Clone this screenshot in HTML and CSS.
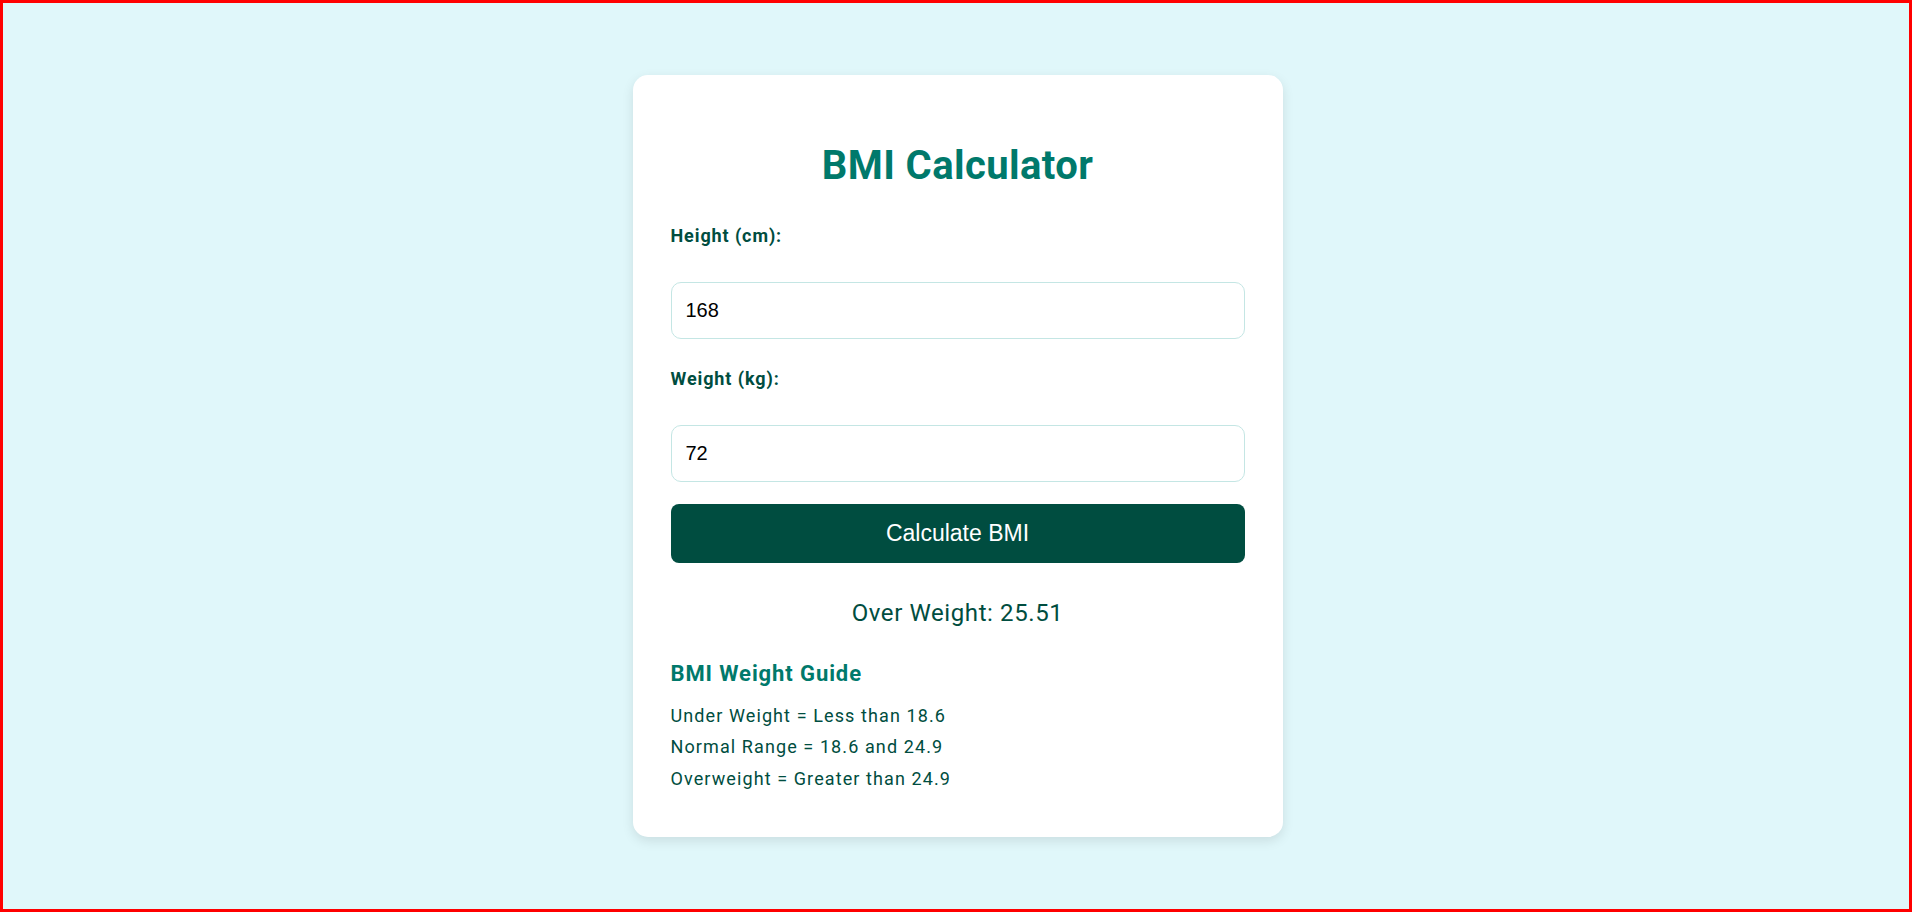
FILE: index.html
```html
<!DOCTYPE html>
<html lang="en">
<head>
<meta charset="UTF-8">
<title>BMI Calculator</title>
<link rel="stylesheet" href="styles.css">
</head>
<body>
<div class="frame">
  <div class="card">
    <h1 class="title">BMI Calculator</h1>
    <label class="label" for="height">Height (cm):</label>
    <input class="input" id="height" type="text" value="168">
    <label class="label" for="weight">Weight (kg):</label>
    <input class="input" id="weight" type="text" value="72">
    <button class="btn" type="button">Calculate BMI</button>
    <div class="result">Over Weight: 25.51</div>
    <div class="guide">
      <h3 class="guide-title">BMI Weight Guide</h3>
      <div class="guide-line">Under Weight = Less than 18.6</div>
      <div class="guide-line">Normal Range = 18.6 and 24.9</div>
      <div class="guide-line">Overweight = Greater than 24.9</div>
    </div>
  </div>
</div>
</body>
</html>
```

FILE: styles.css
```css
html, body {
  margin: 0;
  padding: 0;
  height: 100%;
}
body {
  font-family: Roboto, "Liberation Sans", Arial, sans-serif;
  background: #e0f7fa;
}
.frame {
  box-sizing: border-box;
  height: 100vh;
  border: 3px solid #ff0000;
  padding-left: 3px;
  display: flex;
  align-items: center;
  justify-content: center;
}
.card {
  box-sizing: border-box;
  width: 650px;
  padding: 40px 38px 43px 38px;
  background: #ffffff;
  border-radius: 15px;
  box-shadow: 0 4px 12px rgba(0, 0, 0, 0.1);
  display: flex;
  flex-direction: column;
}
.title {
  margin: 27px 0 36px;
  font-size: 40px;
  font-weight: 700;
  letter-spacing: 0.4px;
  color: #00796b;
  text-align: center;
  line-height: normal;
}
.label {
  display: block;
  font-size: 18px;
  font-weight: 700;
  letter-spacing: 0.9px;
  color: #004d40;
  line-height: normal;
  margin-bottom: 36px;
}
.input {
  box-sizing: border-box;
  width: 100%;
  margin: 0 0 29px;
  padding: 16px 14px;
  font-family: "Liberation Sans", Arial, sans-serif;
  font-size: 20px;
  line-height: normal;
  color: #000000;
  border: 1px solid #c4e6e4;
  border-radius: 10px;
  background: #ffffff;
  outline: none;
}
.input + .btn {
  margin-top: -7px;
}
.btn {
  width: 100%;
  padding: 16px;
  border: none;
  border-radius: 8px;
  background: #004d40;
  color: #ffffff;
  font-family: "Liberation Sans", Arial, sans-serif;
  font-size: 23px;
  line-height: normal;
  cursor: pointer;
}
.result {
  margin-top: 36px;
  font-size: 24px;
  letter-spacing: 0.6px;
  color: #004d40;
  text-align: center;
  line-height: normal;
}
.guide {
  margin-top: 34px;
}
.guide-title {
  margin: 0 0 14px;
  font-size: 22px;
  font-weight: 700;
  letter-spacing: 0.9px;
  color: #00796b;
  line-height: normal;
}
.guide-line {
  font-size: 18px;
  letter-spacing: 1.1px;
  line-height: 31.5px;
  color: #004d40;
}
```
